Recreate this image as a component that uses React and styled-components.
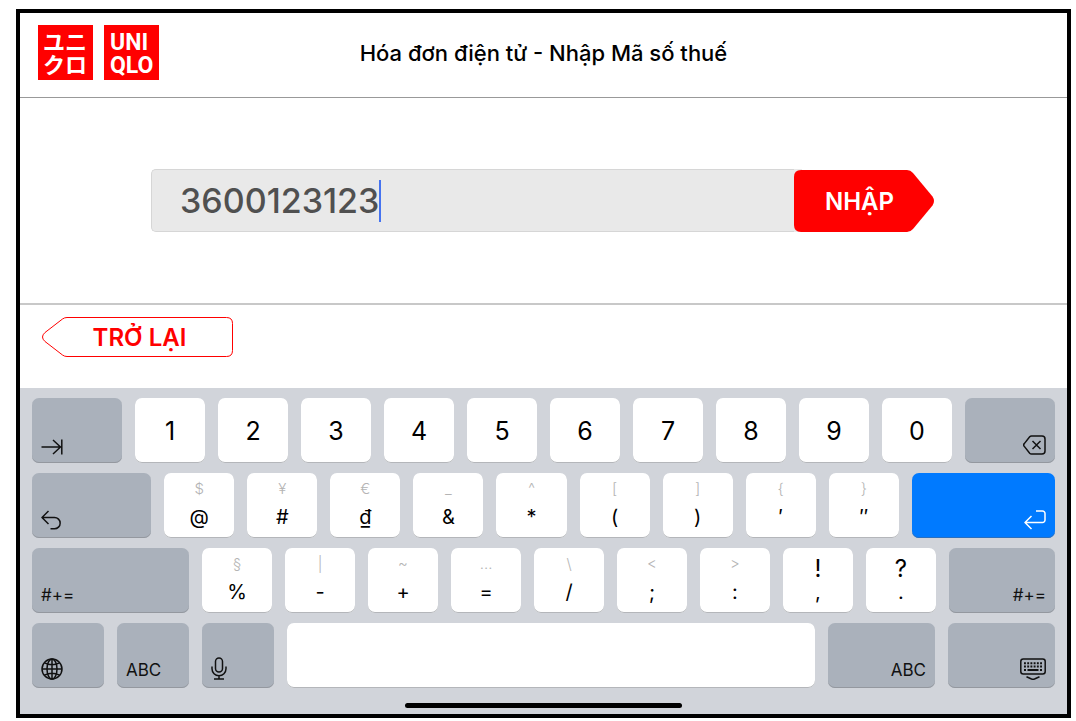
import { useState } from 'react';
import styled, { createGlobalStyle } from 'styled-components';

const row1 = ['1', '2', '3', '4', '5', '6', '7', '8', '9', '0'];

const row2 = [
  { hint: '$', main: '@' },
  { hint: '¥', main: '#' },
  { hint: '€', main: '₫' },
  { hint: '_', main: '&' },
  { hint: '^', main: '*' },
  { hint: '[', main: '(' },
  { hint: ']', main: ')' },
  { hint: '{', main: '′' },
  { hint: '}', main: '″' },
];

const row3 = [
  { hint: '§', main: '%' },
  { hint: '|', main: '-' },
  { hint: '~', main: '+' },
  { hint: '…', main: '=' },
  { hint: '\\', main: '/' },
  { hint: '<', main: ';' },
  { hint: '>', main: ':' },
  { hint: '!', main: ',', strong: true },
  { hint: '?', main: '.', strong: true },
];

function Logo() {
  return (
    <LogoWrapper>
      <LogoTile viewBox="0 0 55 55" aria-hidden="true">
        <rect width="55" height="55" fill="#ff0000" />
        <KanaText x="27" y="25">ユニ</KanaText>
        <KanaText x="27" y="48">クロ</KanaText>
      </LogoTile>
      <LogoTile viewBox="0 0 55 55" aria-hidden="true">
        <rect width="55" height="55" fill="#ff0000" />
        <LatinText x="6" y="25">UNI</LatinText>
        <LatinText x="6" y="48">QLO</LatinText>
      </LogoTile>
    </LogoWrapper>
  );
}

function TabIcon() {
  return (
    <Icon width="22" height="16" viewBox="0 0 22 16">
      <path d="M0.5 8H20M12 1l7.5 7-7.5 7M20.8 0.5v15" />
    </Icon>
  );
}

function UndoIcon() {
  return (
    <Icon width="21" height="20" viewBox="0 0 21 20">
      <path d="M7.500 1L1 7.500l6.500 6.500M1 7.500h12.500a5.600 5.600 0 0 1 0 11.300H9.500" />
    </Icon>
  );
}

function DeleteIcon() {
  return (
    <Icon width="23" height="20" viewBox="0 0 23 20">
      <path d="M8.500 1H19a3 3 0 0 1 3 3v12a3 3 0 0 1-3 3H8.500a2.500 2.500 0 0 1-1.800-.8L1.300 11.400a2 2 0 0 1 0-2.800L6.700 1.800A2.500 2.500 0 0 1 8.500 1z" />
      <path d="M9.500 6l8 8M17.500 6l-8 8" />
    </Icon>
  );
}

function ReturnIcon() {
  return (
    <Icon width="22" height="20" viewBox="0 0 22 20">
      <path d="M7.500 6L1 12.500 7.500 19M1 12.500h17.500a2.500 2.500 0 0 0 2.500-2.500V3.500A2.500 2.500 0 0 0 18.500 1H12" />
    </Icon>
  );
}

function GlobeIcon() {
  return (
    <Icon width="22" height="22" viewBox="0 0 22 22">
      <circle cx="11" cy="11" r="10" />
      <ellipse cx="11" cy="11" rx="5" ry="10" />
      <path d="M11 1v20M1 11h20M3.500 4.800c4.500 2.200 10.500 2.200 15 0M3.500 17.200c4.500-2.200 10.500-2.200 15 0" />
    </Icon>
  );
}

function MicIcon() {
  return (
    <Icon width="16" height="23" viewBox="0 0 16 23">
      <rect x="4.500" y="1" width="7" height="14" rx="3.500" />
      <path d="M1 9.500v2.300a7 7 0 0 0 14 0V9.500M8 18.800v3M3 22h10" />
    </Icon>
  );
}

function KeyboardIcon() {
  return (
    <Icon width="26" height="22" viewBox="0 0 26 22">
      <rect x="0.800" y="1" width="24.400" height="15" rx="2.500" />
      <path d="M4 5.300h18M4 8.600h18" strokeWidth="2" strokeDasharray="1.900 1.320" />
      <path d="M4 12h2M7.500 12h11M20 12h2" strokeWidth="2" />
      <path d="M6.500 18.800l5 2.200q1.500.5 3 0l5-2.200" />
    </Icon>
  );
}

function SymbolKey({ hint, main, strong }) {
  return (
    <StackedKey type="button" $weight={70}>
      <KeyHint $strong={strong}>{hint}</KeyHint>
      <KeySymbol>{main}</KeySymbol>
    </StackedKey>
  );
}

function Keyboard({ onType, onDelete }) {
  return (
    <KeyboardWrapper>
      <KeyRow>
        <ActionKey type="button" $weight={90} aria-label="Tab"><TabIcon /></ActionKey>
        {row1.map((digit) => (
          <DigitKey type="button" key={digit} $weight={70} onClick={() => onType(digit)}>{digit}</DigitKey>
        ))}
        <ActionKey type="button" $weight={90} $right onClick={onDelete} aria-label="Delete"><DeleteIcon /></ActionKey>
      </KeyRow>
      <KeyRow>
        <ActionKey type="button" $weight={119} aria-label="Undo"><UndoIcon /></ActionKey>
        {row2.map((item) => <SymbolKey key={item.main} {...item} />)}
        <ActionKey type="button" $weight={143} $right $primary aria-label="Return"><ReturnIcon /></ActionKey>
      </KeyRow>
      <KeyRow>
        <ActionKey type="button" $weight={157}>#+=</ActionKey>
        {row3.map((item) => <SymbolKey key={item.main} {...item} />)}
        <ActionKey type="button" $weight={106} $right>#+=</ActionKey>
      </KeyRow>
      <KeyRow>
        <ActionKey type="button" $weight={72} aria-label="Language"><GlobeIcon /></ActionKey>
        <ActionKey type="button" $weight={72}>ABC</ActionKey>
        <ActionKey type="button" $weight={72} aria-label="Dictation"><MicIcon /></ActionKey>
        <Key type="button" $weight={528} aria-label="Space" />
        <ActionKey type="button" $weight={107} $right>ABC</ActionKey>
        <ActionKey type="button" $weight={107} $right aria-label="Hide keyboard"><KeyboardIcon /></ActionKey>
      </KeyRow>
      <HomeIndicator />
    </KeyboardWrapper>
  );
}

export default function App() {
  const [taxCode, setTaxCode] = useState('3600123123');

  return (
    <>
      <GlobalStyle />
      <Screen>
        <Header>
          <Logo />
          <Title>Hóa đơn điện tử - Nhập Mã số thuế</Title>
        </Header>
        <FormSection onSubmit={(e) => e.preventDefault()}>
          <Field>
            <TaxInput
              aria-label="Mã số thuế"
              inputMode="numeric"
              value={taxCode}
              onChange={(e) => setTaxCode(e.target.value)}
            />
            <Caret />
          </Field>
          <SubmitButton type="submit">
            <ButtonShape width="140" height="63" viewBox="0 0 140 63" fill="#ff0000">
              <path d="M7 1H113q3.500 0 6 3L138.500 27.500q3 4.500 0 9L119 60q-2.500 3-6 3H7q-7 0-7-7V8q0-7 7-7z" />
            </ButtonShape>
            <SubmitLabel>NHẬP</SubmitLabel>
          </SubmitButton>
        </FormSection>
        <BackSection>
          <BackButton type="button">
            <ButtonShape width="191" height="40" viewBox="0 0 191 40" fill="none" stroke="#ff0000">
              <path d="M25 0.500H184.500q6 0 6 6V33.500q0 6-6 6H25q-2.500 0-4.500-1.500L3 24.500q-5-4.500 0-9L20.500 2q2-1.500 4.500-1.500z" />
            </ButtonShape>
            <BackLabel>TRỞ LẠI</BackLabel>
          </BackButton>
        </BackSection>
        <Keyboard
          onType={(digit) => setTaxCode(taxCode + digit)}
          onDelete={() => setTaxCode(taxCode.slice(0, -1))}
        />
      </Screen>
    </>
  );
}

const GlobalStyle = createGlobalStyle`
* {
  box-sizing: border-box;
}
body {
  margin: 0;
  padding: 9px 5px 3px 16px;
  background: #ffffff;
  font-family: Inter, "Liberation Sans", sans-serif;
}
button, input {
  margin: 0;
  padding: 0;
  border: 0;
  background: none;
  font-family: inherit;
}
`

const Screen = styled.main`
display: flex;
flex-direction: column;
border: 4px solid #000000;
background: #ffffff;
`

const Header = styled.header`
display: grid;
grid-template-columns: 1fr auto 1fr;
align-items: center;
padding: 12px 18px 17px;
border-bottom: 1px solid #999999;
`

const LogoWrapper = styled.div`
display: flex;
gap: 11px;
`

const LogoTile = styled.svg`
width: 55px;
height: 55px;
`

const KanaText = styled.text`
font-family: "Noto Sans CJK JP", sans-serif;
font-size: 22px;
font-weight: 700;
text-anchor: middle;
fill: #ffffff;
`

const LatinText = styled.text`
font-family: Roboto, sans-serif;
font-size: 23px;
font-weight: 700;
fill: #ffffff;
`

const Title = styled.h1`
margin: 0;
font-size: 22px;
line-height: 28px;
font-weight: 500;
color: #000000;
`

const FormSection = styled.form`
display: flex;
padding: 71px 133px 71px 131px;
border-bottom: 2px solid #c8c8c8;
`

const Field = styled.div`
flex: 1;
display: flex;
align-items: center;
height: 63px;
padding-left: 28px;
border: 1px solid #d6d6d6;
border-right: 0;
border-radius: 5px 0 0 5px;
background: #e9e9e9;
`

const TaxInput = styled.input`
field-sizing: content;
font-size: 34px;
line-height: 42px;
font-weight: 500;
color: #505050;
caret-color: transparent;
outline: none;
`

const Caret = styled.span`
width: 2px;
height: 42px;
background: #4573f0;
`

const ButtonShape = styled.svg`
grid-area: 1 / 1;
display: block;
`

const ShapedButton = styled.button`
display: grid;
align-items: center;
font-size: 24px;
line-height: 30px;
font-weight: 600;
cursor: pointer;
`

const SubmitButton = styled(ShapedButton)`
color: #ffffff;
background: linear-gradient(to right, #e9e9e9 8px, transparent 8px);
`

const SubmitLabel = styled.span`
grid-area: 1 / 1;
padding: 2px 9px 0 0;
`

const BackSection = styled.div`
display: flex;
padding: 12px 22px 31px;
`

const BackButton = styled(ShapedButton)`
color: #ff0000;
`

const BackLabel = styled.span`
grid-area: 1 / 1;
padding: 1px 0 0 4px;
`

const KeyboardWrapper = styled.section`
display: flex;
flex-direction: column;
gap: 10px;
padding: 10px 12px 6px;
background: #d1d4da;
`

const KeyRow = styled.div`
display: flex;
gap: 13px;
`

const Key = styled.button`
flex: ${({ $weight }) => `${$weight} ${$weight} ${$weight}px`};
min-width: 0;
height: 65px;
border-radius: 7px;
background: #ffffff;
box-shadow: inset 0 -1px 0 #b4b6ba;
color: #000000;
cursor: pointer;
`

const DigitKey = styled(Key)`
font-size: 25px;
line-height: 30px;
`

const StackedKey = styled(Key)`
display: flex;
flex-direction: column;
align-items: center;
justify-content: space-between;
padding: 8px 0 11px;
`

const KeyHint = styled.span`
font-size: ${(props) => (props.$strong ? '24px' : '15px')};
line-height: ${(props) => (props.$strong ? '26px' : '15px')};
font-weight: ${(props) => (props.$strong ? 400 : 300)};
color: ${(props) => (props.$strong ? '#000000' : '#b4b4b4')};
`

const KeySymbol = styled.span`
font-size: 20px;
line-height: 20px;
`

const ActionKey = styled(Key)`
display: flex;
align-items: flex-end;
justify-content: ${(props) => (props.$right ? 'flex-end' : 'flex-start')};
padding: 8px 9px;
font-size: 17px;
line-height: 20px;
color: ${(props) => (props.$primary ? '#ffffff' : '#111111')};
background: ${(props) => (props.$primary ? '#007aff' : '#aab1bb')};
box-shadow: inset 0 -1px 0 ${(props) => (props.$primary ? '#2b6fbd' : '#94989f')};
`

const Icon = styled.svg`
fill: none;
stroke: currentColor;
stroke-width: 1.5;
stroke-linecap: butt;
stroke-linejoin: round;
`

const HomeIndicator = styled.div`
width: 27%;
height: 5px;
margin: 5px auto 0;
border-radius: 3px;
background: #000000;
`
